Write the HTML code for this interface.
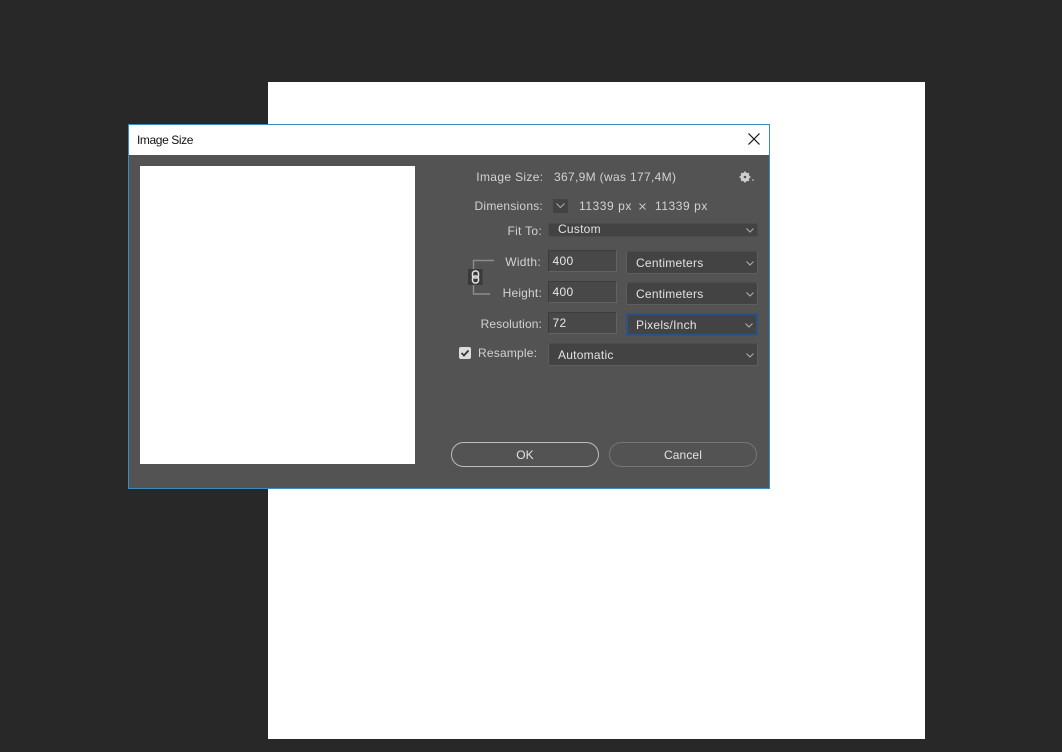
<!DOCTYPE html>
<html><head><meta charset="utf-8">
<style>
html,body{margin:0;padding:0;width:1062px;height:752px;overflow:hidden;background:#282828}
body{position:relative;font-family:"Liberation Sans",sans-serif;font-size:12px;color:#d2d2d2}
.a{position:absolute;box-sizing:border-box}
.t{position:absolute;white-space:nowrap;line-height:14px;letter-spacing:.3px}
.r{text-align:right}
.in{position:absolute;box-sizing:border-box;background:#484848;border:1px solid #3c3c3c;border-bottom-color:#626262;border-right-color:#626262;color:#e6e6e6;padding-left:3.5px;letter-spacing:.35px;line-height:21px;font-size:12px}
.dd{position:absolute;box-sizing:border-box;background:#434343;border:1px solid #5e5e5e;border-top-color:#4c4c4c;border-radius:2px;color:#e2e2e2;padding-left:9px;letter-spacing:.25px;font-size:12px}
.dd svg{position:absolute;right:3px;top:50%;margin-top:-2px}
.btn{position:absolute;box-sizing:border-box;height:25px;width:148px;border-radius:13px;text-align:center;line-height:24px;color:#e2e2e2;letter-spacing:.1px}
</style></head><body>
<div class="a" style="left:268px;top:82px;width:657px;height:657px;background:#fff"></div>
<div class="a" style="left:128px;top:124px;width:642px;height:365px;background:#535353;border:1px solid #3a8bbf">
<div class="a" style="left:0;top:0;width:640px;height:30px;background:#fff"></div>
</div>
<div class="t" style="left:137px;top:133px;color:#111;letter-spacing:-.4px">Image Size</div>
<svg class="a" style="left:747px;top:132px" width="14" height="14"><path d="M1.5 1.5L12.5 12.5M12.5 1.5L1.5 12.5" stroke="#111" stroke-width="1.2" fill="none"/></svg>
<div class="a" style="left:140px;top:166px;width:275px;height:298px;background:#fff"></div>

<div class="t r" style="left:443px;width:100.5px;top:170px;letter-spacing:.35px">Image Size:</div>
<div class="t" style="left:554px;top:170px;letter-spacing:.33px">367,9M (was 177,4M)</div>
<svg class="a" style="left:739px;top:170px" width="18" height="14"><circle cx="6" cy="7" r="3.4" fill="none" stroke="#d0d0d0" stroke-width="2.4"/><path d="M6 1.5V12.5M.5 7H11.500M2.2 3.2L9.8 10.8M9.8 3.2L2.2 10.8" stroke="#d0d0d0" stroke-width="1.6"/><circle cx="6" cy="7" r="1.3" fill="#535353"/><rect x="13" y="9.500" width="2" height="1.2" fill="#b8b8b8"/></svg>

<div class="t r" style="left:443px;width:100px;top:199px;letter-spacing:.22px">Dimensions:</div>
<div class="a" style="left:553px;top:199px;width:15px;height:14px;background:#434343"></div>
<svg class="a" style="left:553px;top:198px" width="15" height="15"><path d="M3.500 5.500L7.500 9.500L11.500 5.500" stroke="#aaa" fill="none"/></svg>
<div class="t" style="left:579px;top:199px;letter-spacing:.55px">11339 px</div>
<svg class="a" style="left:638px;top:202px" width="9" height="9"><path d="M1.500 1.500L7.500 7.500M7.500 1.500L1.500 7.500" stroke="#c8c8c8" fill="none"/></svg>
<div class="t" style="left:655px;top:199px;letter-spacing:.55px">11339 px</div>

<div class="t r" style="left:443px;width:99px;top:224px">Fit To:</div>
<div class="dd" style="left:548px;top:223px;width:209.500px;height:14px;line-height:11px;border-color:#4c4c4c">Custom<svg width="8" height="5"><path d="M.5 .5L4 4L7.500 .5" stroke="#b0b0b0" fill="none"/></svg></div>

<svg class="a" style="left:465px;top:255px" width="32" height="44"><path d="M8.500 14V5.500H29M8.500 30V39H25" stroke="#8c8c8c" stroke-width="1.4" fill="none"/><rect x="3" y="14" width="14.500" height="16" fill="#3a3a3a"/><rect x="7.500" y="16" width="6" height="7" rx="2.600" fill="none" stroke="#e2e2e2" stroke-width="1.500"/><rect x="7.500" y="21" width="6" height="7" rx="2.600" fill="none" stroke="#e2e2e2" stroke-width="1.500"/></svg>

<div class="t r" style="left:443px;width:98px;top:255px">Width:</div>
<div class="in" style="left:548px;top:250px;width:69px;height:22px">400</div>
<div class="dd" style="left:626px;top:251px;width:131.500px;height:23px;line-height:22px">Centimeters<svg width="8" height="5"><path d="M.5 .5L4 4L7.500 .5" stroke="#b0b0b0" fill="none"/></svg></div>

<div class="t r" style="left:443px;width:99px;top:286px;letter-spacing:.2px">Height:</div>
<div class="in" style="left:548px;top:281px;width:69px;height:22px">400</div>
<div class="dd" style="left:626px;top:282px;width:131.500px;height:23px;line-height:22px">Centimeters<svg width="8" height="5"><path d="M.5 .5L4 4L7.500 .5" stroke="#b0b0b0" fill="none"/></svg></div>

<div class="t r" style="left:443px;width:99px;top:317px;letter-spacing:.12px">Resolution:</div>
<div class="in" style="left:548px;top:312px;width:69px;height:22px">72</div>
<div class="dd" style="left:626px;top:313px;width:132px;height:23px;line-height:21px;border:2px solid #2b5385;padding-left:8px">Pixels/Inch<svg width="8" height="5"><path d="M.5 .5L4 4L7.500 .5" stroke="#b0b0b0" fill="none"/></svg></div>

<div class="a" style="left:459px;top:347px;width:12px;height:12px;background:#dcdcdc;border-radius:2px"></div>
<svg class="a" style="left:459px;top:347px" width="12" height="12"><path d="M2.500 6L5 8.500L9.500 3.500" stroke="#333" stroke-width="1.800" fill="none"/></svg>
<div class="t" style="left:478px;top:346px;letter-spacing:.2px">Resample:</div>
<div class="dd" style="left:548px;top:343px;width:209.500px;height:23px;line-height:22px">Automatic<svg width="8" height="5"><path d="M.5 .5L4 4L7.500 .5" stroke="#b0b0b0" fill="none"/></svg></div>

<div class="btn" style="left:451px;top:442px;border:1.500px solid #bcbcbc">OK</div>
<div class="btn" style="left:609px;top:442px;border:1px solid #757575">Cancel</div>
</body></html>
